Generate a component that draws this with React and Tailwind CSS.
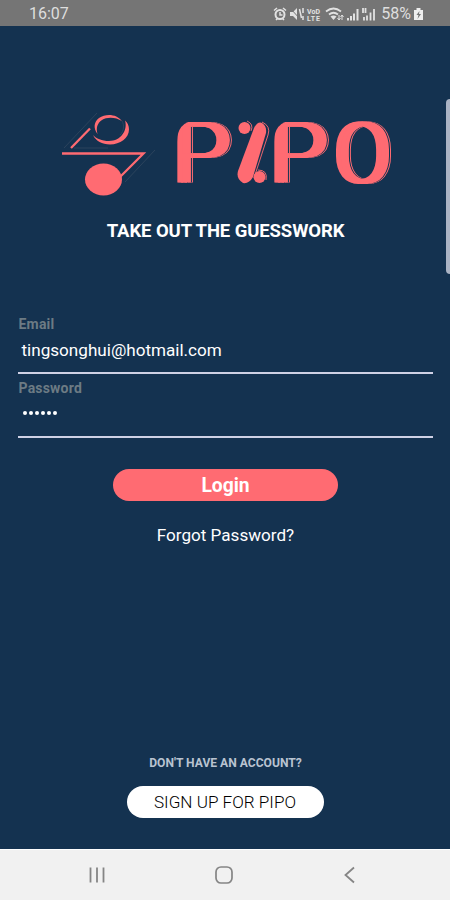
import React from 'react'

function LogoMark() {
    return (
        <svg width="96" height="88" viewBox="0 0 96 88" fill="none" aria-hidden="true">
            <g stroke="#31485f" strokeWidth="0.800">
                <path d="M4 40L37 5" />
                <path d="M95 42L65 74" />
                <path d="M14 40H48" />
            </g>
            <path d="M11 40L30 20.500" stroke="#ff6b72" strokeWidth="2.300" />
            <path d="M2 45.500H83.500L60 69" stroke="#ff6b72" strokeWidth="2.300" />
            <ellipse cx="43.500" cy="71.500" rx="18.500" ry="16" fill="#ff6b72" />
            <path d="M33 27C36 33 42 36.500 50 36.500C60 36.500 69 30 69 21.500C69 17.500 67.500 14.500 65 12.500C68 22 61 33 49 33C42 33 36 30.500 33 27Z" fill="#ff6b72" />
            <path d="M37.500 26C33 20 34 14 39 10C46 5 57 6 62 13C56 9 47 8.500 42 12C37 15.500 36 20 37.500 26Z" fill="#ff6b72" />
            <path d="M62 13C64.500 17 64 23 60 27" stroke="#31485f" strokeWidth="0.800" />
        </svg>
    )
}

function Wordmark() {
    const letter = '[filter:drop-shadow(4px_0_0_#ff6b72)_drop-shadow(4px_0_0_#ff6b72)_drop-shadow(1px_0_0_#143250)_drop-shadow(1px_0_0_#ff6b72)]'
    return (
        <svg className="overflow-visible" width="222" height="104" viewBox="0 0 222 104" fill="#ff6b72" fontFamily="Roboto, sans-serif" fontWeight="300" fontSize="86">
            <clipPath id="first">
                <path d="M3 104V40Q3 20 22 18H70V104Z" />
            </clipPath>
            <clipPath id="second">
                <path d="M100 104V40Q100 20 119 18H166V104Z" />
            </clipPath>
            <g clipPath="url(#first)">
                <text x="-5" y="81" textLength="57" lengthAdjust="spacingAndGlyphs" className={letter}>P</text>
            </g>
            <g>
                <circle cx="70.500" cy="26" r="6" />
                <circle cx="85.500" cy="75" r="6" />
                <path d="M80 26Q84 19 88 21Q93 24 92 31L79 75Q75 82 69 81Q62 77 64 69Z" />
                <path d="M73 19Q80 22 77 29M88 20Q97 24 94 33L80 76M84 68Q94 68 92 78" fill="none" stroke="#ff6b72" strokeWidth="0.900" />
            </g>
            <g clipPath="url(#second)">
                <text x="92" y="81" textLength="57" lengthAdjust="spacingAndGlyphs" className={letter}>P</text>
            </g>
            <text x="157" y="81" textLength="55" lengthAdjust="spacingAndGlyphs" className={letter}>O</text>
        </svg>
    )
}

function StatusIcons() {
    return (
        <svg width="104" height="18" viewBox="0 0 104 18" fill="none" stroke="#e2e2e2" strokeWidth="1.500" aria-hidden="true">
            {/* alarm */}
            <circle cx="7" cy="9.500" r="4.500" strokeWidth="2" />
            <path d="M7 7v3h2.500M1 5.500L4 3M13 5.500L10 3M3 15l2-2M11 15l-2-2" />
            {/* muted */}
            <path d="M17 7h3l4-4v12l-4-4h-3z" fill="#e2e2e2" stroke="none" />
            <path d="M17 3l11 12" stroke="#757575" strokeWidth="1" />
            <path d="M26.500 4l2 9M30 3v5M30 11v4" />
            {/* volte */}
            <g fill="#e2e2e2" stroke="none" fontFamily="Roboto, sans-serif" fontWeight="700" fontSize="7">
                <text x="34" y="9" textLength="13">VoD</text>
                <text x="34" y="15.500" textLength="13">LTE</text>
            </g>
            {/* wifi */}
            <path d="M53 6.500Q60.500 0.500 68 6.500M56 9.500Q60.500 6 65 9.500" strokeWidth="1.800" />
            <path d="M57.500 11.500Q60.500 9.500 63.500 11.500L60.500 15z" fill="#e2e2e2" stroke="none" />
            <path d="M66 10v5M69 10v5M64.500 13l1.500 2 1.500-2M67.500 12l1.500-2 1.500 2" strokeWidth="1" />
            {/* signal */}
            <path d="M75 13v2.500M78 11v4.500M81 8.500v7M84.500 4v11.500" strokeWidth="2" />
            <path d="M91 12v3.500M94 10.500v5M97.500 7.500v8M101 4v11.500M90 3v5M92.500 3v5" strokeWidth="1.800" />
        </svg>
    )
}

function Field({ label, children }) {
    return (
        <div className="h-16 border-b-2 border-[#cfd1e5]">
            <div className="h-5 pt-[6px] pl-px text-[14px] leading-4 font-bold tracking-[0.2px] text-[#6c7b84]">{label}</div>
            {children}
        </div>
    )
}

export default function App() {
    return (
        <div className="relative flex h-[900px] w-[450px] flex-col overflow-hidden bg-[#143250] font-[Roboto,sans-serif] text-white">
            <header className="flex h-[26px] shrink-0 items-center bg-[#757575] pt-[2px] pr-[27px] pl-[29px] text-[16px] text-[#dedede]">
                <span>16:07</span>
                <div className="ml-auto flex items-center">
                    <StatusIcons />
                    <span className="ml-[4px] text-[16px]">58%</span>
                    <svg className="ml-[3px]" width="9" height="14" viewBox="0 0 9 14" aria-hidden="true">
                        <path d="M2.500 1h4v2H9v10H0V3h2.500z" fill="#eeeeee" />
                        <path d="M5.500 4L2.500 8h2L3.500 12 7 7H5z" fill="#757575" />
                    </svg>
                </div>
            </header>

            <main className="flex flex-1 flex-col items-center">
                <div className="mt-[82px] flex h-24 w-full items-start pl-[60px]">
                    <LogoMark />
                    <div className="mt-[-6px] ml-[18px]">
                        <Wordmark />
                    </div>
                </div>
                <h1 className="mt-[15px] pl-px text-[18.500px] leading-6 font-bold tracking-[-0.1px]">TAKE OUT THE GUESSWORK</h1>

                <form className="mt-[67px] w-[415px]">
                    <Field label="Email">
                        <div className="pt-2 pl-1 text-[17.100px] leading-6">tingsonghui@hotmail.com</div>
                    </Field>
                    <Field label="Password">
                        <div className="flex gap-[2px] pt-[17px] pl-[5px]">
                            {[0, 1, 2, 3, 4, 5].map(i => <span key={i} className="size-1 rounded-full bg-white" />)}
                        </div>
                    </Field>
                </form>

                <button className="mt-[31px] h-8 w-[225px] rounded-full bg-[#ff6b72] pt-[3px] pl-px text-[19.300px] font-bold">Login</button>
                <a className="mt-[22px] pl-px text-[17.100px] leading-6">Forgot Password?</a>

                <p className="mt-auto pl-px text-[12.100px] leading-4 font-bold text-[#b9c3d0]">DON'T HAVE AN ACCOUNT?</p>
                <button className="mt-[15px] mb-[31px] h-8 w-[197px] rounded-full bg-white pt-[2px] text-[17.100px] font-light text-black">SIGN UP FOR PIPO</button>
            </main>

            <nav className="flex h-[51px] shrink-0 items-center justify-between border-t border-white bg-[#f1f1f1] pr-[91px] pl-[88px]">
                <svg width="18" height="18" viewBox="0 0 18 18" stroke="#858585" strokeWidth="1.800" aria-hidden="true">
                    <path d="M2.500 1.500v15M9 1.500v15M15.500 1.500v15" />
                </svg>
                <svg width="18" height="18" viewBox="0 0 18 18" fill="none" stroke="#858585" strokeWidth="1.700" aria-hidden="true">
                    <rect x="1" y="1" width="16" height="16" rx="5" />
                </svg>
                <svg width="18" height="18" viewBox="0 0 18 18" fill="none" stroke="#858585" strokeWidth="1.800" aria-hidden="true">
                    <path d="M13 1.500L4.500 9L13 16.500" />
                </svg>
            </nav>

            <div className="absolute top-[99px] right-0 h-[175px] w-[4px] rounded-l-[4px] bg-[#aab3c4]" />
        </div>
    )
}
